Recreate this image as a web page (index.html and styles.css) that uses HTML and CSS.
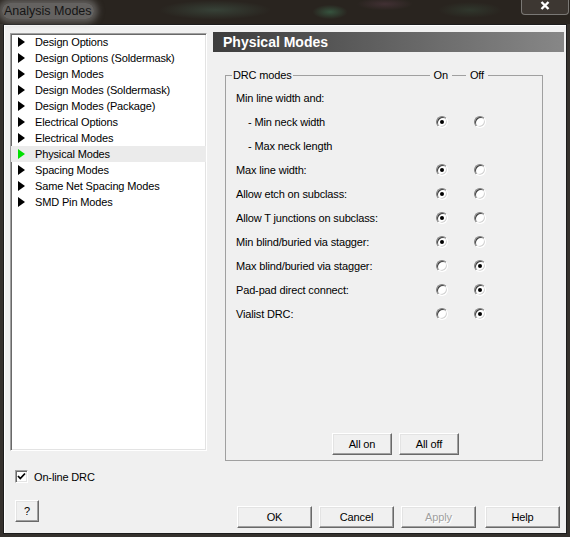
FILE: index.html
```html
<!DOCTYPE html>
<html lang="en">

<head>
    <meta charset="UTF-8">
    <title>Analysis Modes</title>
    <link rel="stylesheet" href="styles.css">
</head>

<body>
    <div class="titlebar">
        <span class="title">Analysis Modes</span>
        <span class="close">
            <svg width="10" height="9" viewBox="0 0 10 9">
                <path d="M1.5 1 L8.5 8 M8.5 1 L1.5 8" stroke="#fff" stroke-width="2.4" fill="none" />
            </svg>
        </span>
    </div>

    <div class="client">
        <!-- 左边 列表 -->
        <div class="side">
            <ul class="tree">
                <li><i class="arrow"></i>Design Options</li>
                <li><i class="arrow"></i>Design Options (Soldermask)</li>
                <li><i class="arrow"></i>Design Modes</li>
                <li><i class="arrow"></i>Design Modes (Soldermask)</li>
                <li><i class="arrow"></i>Design Modes (Package)</li>
                <li><i class="arrow"></i>Electrical Options</li>
                <li><i class="arrow"></i>Electrical Modes</li>
                <li class="on"><i class="arrow"></i>Physical Modes</li>
                <li><i class="arrow"></i>Spacing Modes</li>
                <li><i class="arrow"></i>Same Net Spacing Modes</li>
                <li><i class="arrow"></i>SMD Pin Modes</li>
            </ul>
            <label class="check">
                <span class="box">
                    <svg width="11" height="11" viewBox="0 0 11 11">
                        <path d="M2 5 L4.3 7.5 L9 2.5" stroke="#000" stroke-width="1.8" fill="none" />
                    </svg>
                </span>
                On-line DRC
            </label>
            <button class="btn btn-q">?</button>
        </div>

        <!-- 右边 -->
        <div class="main">
            <div class="banner">Physical Modes</div>
            <div class="group">
                <div class="group-head">
                    <span class="seg seg-l"></span>
                    <span class="lbl">DRC modes</span>
                    <span class="seg seg-fill"></span>
                    <span class="lbl lbl-col">On</span>
                    <span class="seg seg-mid"></span>
                    <span class="lbl lbl-col">Off</span>
                    <span class="seg seg-r"></span>
                </div>
                <div class="group-body">
                    <div class="row"><span>Min line width and:</span></div>
                    <div class="row"><span class="sub">- Min neck width</span><i class="radio on"></i><i class="radio"></i></div>
                    <div class="row"><span class="sub">- Max neck length</span></div>
                    <div class="row"><span>Max line width:</span><i class="radio on"></i><i class="radio"></i></div>
                    <div class="row"><span>Allow etch on subclass:</span><i class="radio on"></i><i class="radio"></i></div>
                    <div class="row"><span>Allow T junctions on subclass:</span><i class="radio on"></i><i class="radio"></i></div>
                    <div class="row"><span>Min blind/buried via stagger:</span><i class="radio on"></i><i class="radio"></i></div>
                    <div class="row"><span>Max blind/buried via stagger:</span><i class="radio"></i><i class="radio on"></i></div>
                    <div class="row"><span>Pad-pad direct connect:</span><i class="radio"></i><i class="radio on"></i></div>
                    <div class="row"><span>Vialist DRC:</span><i class="radio"></i><i class="radio on"></i></div>

                    <div class="group-btns">
                        <button class="btn btn-sm">All on</button>
                        <button class="btn btn-sm">All off</button>
                    </div>
                </div>
            </div>

            <div class="dlg-btns">
                <button class="btn">OK</button>
                <button class="btn">Cancel</button>
                <button class="btn disabled">Apply</button>
                <button class="btn help">Help</button>
            </div>
        </div>
    </div>
</body>

</html>
```

FILE: styles.css
```css
* {
    margin: 0;
    padding: 0;
    box-sizing: border-box;
}

body {
    width: 570px;
    height: 537px;
    overflow: hidden;
    background: #35312d;
    font-family: "Liberation Sans", Arial, sans-serif;
    font-size: 11px;
    letter-spacing: -0.15px;
    color: #000;
}

button {
    font: inherit;
    letter-spacing: inherit;
    color: inherit;
}

/* 标题栏 */
.titlebar {
    height: 24px;
    display: flex;
    align-items: flex-start;
    padding-left: 2px;
    background:
        radial-gradient(ellipse 70px 12px at 215px 10px, rgba(80, 120, 100, .35), transparent 80%),
        radial-gradient(ellipse 22px 9px at 330px 12px, rgba(70, 140, 100, .45), transparent 80%),
        radial-gradient(ellipse 35px 8px at 385px 4px, rgba(110, 70, 90, .35), transparent 80%),
        radial-gradient(ellipse 40px 10px at 470px 10px, rgba(60, 90, 70, .35), transparent 80%),
        #29241f;
}

.title {
    margin-top: 3px;
    padding: 0 2px;
    font-size: 12.5px;
    line-height: 16px;
    letter-spacing: 0;
    color: #151515;
    background: rgba(150, 150, 150, .55);
    box-shadow: 0 0 6px 4px rgba(150, 150, 150, .5);
    border-radius: 8px;
}

.close {
    margin-left: auto;
    margin-right: 1px;
    width: 48px;
    height: 15px;
    display: flex;
    justify-content: center;
    padding-top: 1px;
    border: 1px solid rgba(200, 200, 200, .45);
    border-top: none;
    border-radius: 0 0 4px 4px;
    background: rgba(70, 64, 58, .7);
}

/* 内容区 */
.client {
    margin: 0 3px;
    height: 510px;
    display: flex;
    padding: 7px 0 0 6px;
    background: #f0f0f0;
    border: 1px solid #1c1c1c;
    box-shadow: inset 1px 1px 0 #fff;
}

.side {
    width: 197px;
    padding-top: 1px;
    display: flex;
    flex-direction: column;
    align-items: flex-start;
}

.tree {
    list-style: none;
    width: 197px;
    height: 418px;
    background: #fff;
    border: 1px solid;
    border-color: #a0a0a0 #fff #fff #a0a0a0;
    box-shadow: inset 1px 1px 0 #696969, inset -1px -1px 0 #e3e3e3;
}

.tree li {
    height: 16px;
    display: flex;
    align-items: center;
    padding-left: 7px;
}

.tree li.on {
    background: #ebebeb;
}

.tree .arrow {
    width: 0;
    height: 0;
    margin-right: 10px;
    border-left: 7px solid #000;
    border-top: 5.5px solid transparent;
    border-bottom: 5.5px solid transparent;
}

.tree li.on .arrow {
    border-left-color: #00e000;
}

.check {
    margin: 19px 0 0 5px;
    height: 13px;
    display: flex;
    align-items: center;
    gap: 6px;
}

.check .box {
    width: 13px;
    height: 13px;
    background: #fff;
    border: 1px solid;
    border-color: #a0a0a0 #fff #fff #a0a0a0;
    box-shadow: inset 1px 1px 0 #696969, inset -1px -1px 0 #e3e3e3;
    display: flex;
    align-items: center;
    justify-content: center;
}

/* 按钮 */
.btn {
    width: 75px;
    height: 22px;
    background: #f0f0f0;
    border: 1px solid;
    border-color: #fff #696969 #696969 #fff;
    box-shadow: inset -1px -1px 0 #a0a0a0, inset 1px 1px 0 #e3e3e3;
    text-align: center;
}

.btn.disabled {
    color: #a0a0a0;
    text-shadow: 1px 1px 0 #fff;
}

.btn-q {
    width: 24px;
    margin: 17px 0 0 5px;
}

.btn-sm {
    width: 60px;
}

.main {
    width: 351px;
    margin-left: 6px;
    display: flex;
    flex-direction: column;
}

.banner {
    height: 20px;
    padding-left: 10px;
    line-height: 21px;
    font-size: 14px;
    font-weight: bold;
    letter-spacing: 0;
    color: #fff;
    background: linear-gradient(to right, #3d3d3d, #878787);
}

/* 分组框 */
.group {
    width: 318px;
    margin: 16px 0 0 12px;
}

.group-head {
    height: 14px;
    display: flex;
    align-items: center;
}

.group-head .seg {
    align-self: flex-end;
    height: 7px;
    border-top: 1px solid #a0a0a0;
}

.group-head .seg-l {
    width: 7px;
    border-left: 1px solid #a0a0a0;
}

.group-head .lbl {
    padding: 0 1px;
    line-height: 14px;
}

.group-head .lbl-col {
    padding: 0 4px;
}

.group-head .seg-fill {
    flex: 1;
}

.group-head .seg-mid {
    width: 14px;
}

.group-head .seg-r {
    width: 55px;
    border-right: 1px solid #a0a0a0;
}

.group-body {
    height: 379px;
    padding: 4px 0 0 10px;
    border: 1px solid #a0a0a0;
    border-top: none;
    display: flex;
    flex-direction: column;
}

.row {
    height: 24px;
    display: grid;
    grid-template-columns: 200px 38px 12px;
    align-items: center;
}

.row .sub {
    padding-left: 12px;
}

.radio {
    position: relative;
    width: 12px;
    height: 12px;
    border-radius: 50%;
    background: #fff;
    border: 1px solid;
    border-color: #808080 #fff #fff #808080;
    box-shadow: inset 1px 1px 0 #404040, inset -1px -1px 0 #d4d4d4;
}

.radio.on::after {
    content: "";
    position: absolute;
    left: 3px;
    top: 3px;
    width: 4px;
    height: 4px;
    border-radius: 50%;
    background: #000;
}

.group-btns {
    margin: auto 0 5px 96px;
    display: flex;
    gap: 7px;
}

.dlg-btns {
    margin: 45px 0 0 24px;
    display: flex;
    gap: 7px;
}

.dlg-btns .help {
    margin-left: 2px;
}
```
